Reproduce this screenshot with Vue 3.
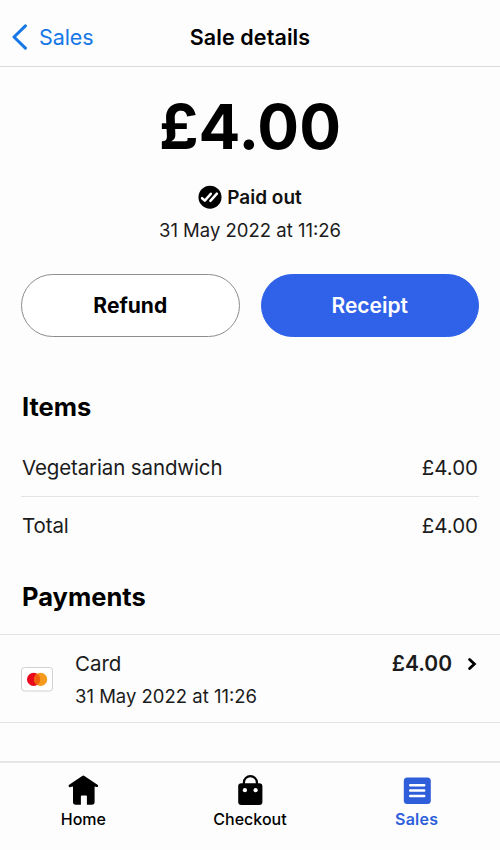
<script setup>
const items = [
  { name: 'Vegetarian sandwich', price: '£4.00' },
  { name: 'Total', price: '£4.00' },
]
</script>

<template>
  <div class="screen">
    <header class="nav">
      <a class="back">
        <svg width="16" height="26" viewBox="0 0 16 26" fill="none">
          <path d="M13.4 1.9 2 13 13.4 24.1" stroke="currentColor" stroke-width="3" stroke-linecap="round" stroke-linejoin="round" />
        </svg>
        <span class="back-label">Sales</span>
      </a>
      <h1 class="title"><span>Sale details</span></h1>
    </header>

    <main class="content">
      <div class="amount"><span>£4.00</span></div>
      <div class="status">
        <svg width="24" height="24" viewBox="0 0 24 24" fill="none">
          <circle cx="12" cy="12.2" r="11.5" fill="#000" />
          <path d="M4.1 13.2 6.8 15.6 12.8 8.8M12.4 15.9 18.9 8.6" stroke="#fff" stroke-width="2.5" stroke-linecap="round" stroke-linejoin="round" />
        </svg>
        <span class="status-label">Paid out</span>
      </div>
      <div class="date"><span>31 May 2022 at 11:26</span></div>

      <div class="actions">
        <button class="btn refund"><span>Refund</span></button>
        <button class="btn receipt"><span>Receipt</span></button>
      </div>

      <h2 class="items-title"><span>Items</span></h2>
      <div class="items">
        <div v-for="item in items" :key="item.name" class="row">
          <span :class="item.name === 'Total' ? 'total' : 'item-name'">{{ item.name }}</span>
          <span class="price">{{ item.price }}</span>
        </div>
      </div>

      <h2 class="payments-title"><span>Payments</span></h2>
      <div class="payment">
        <svg class="card" width="32" height="25" viewBox="0 0 32 25">
          <rect x=".5" y=".5" width="31" height="23.5" rx="3" fill="#fff" stroke="#d0d0d0" />
          <circle cx="12.6" cy="12.4" r="6.6" fill="#e9081d" />
          <circle cx="19.6" cy="12.4" r="6.6" fill="#f49a1c" />
          <path d="M16.1 6.8a6.6 6.6 0 0 1 0 11.2a6.6 6.6 0 0 1 0-11.2Z" fill="#f2600d" />
        </svg>
        <div class="payment-info">
          <span class="method">Card</span>
          <span class="payment-date">31 May 2022 at 11:26</span>
        </div>
        <div class="payment-amount">
          <span class="paid">£4.00</span>
          <svg width="10" height="14" viewBox="0 0 10 14" fill="none">
            <path d="M2.6 2.4 7.4 7 2.6 11.6" stroke="#000" stroke-width="2.8" stroke-linecap="round" />
          </svg>
        </div>
      </div>
    </main>

    <nav class="tabs">
      <a class="tab">
        <svg width="30" height="30" viewBox="0 0 30 30">
          <path d="M14.2.9Q15.3.2 16.4.9L29.5 9.8a1.2 1.2 0 0 1-1.2 2.1L26.6 11.4V27Q26.6 29.8 23.8 29.8H18.9V21.3Q18.9 20.4 18 20.4H13.8Q12.9 20.4 12.9 21.3V29.8H7.8Q5 29.8 5 27V11.4L2.5 11.9a1.2 1.2 0 0 1-1.3-2.1Z" />
        </svg>
        <span class="home">Home</span>
      </a>
      <a class="tab">
        <svg width="30" height="30" viewBox="0 0 30 30">
          <path d="M8.9 10V7.4a6.5 6.2 0 0 1 13 0V10" fill="none" stroke="#000" stroke-width="2.2" />
          <rect x="3.2" y="8.3" width="24.2" height="21.6" rx="3.2" />
          <circle cx="9.9" cy="15.2" r="2.1" fill="#fff" />
          <circle cx="20.6" cy="15.2" r="2.1" fill="#fff" />
        </svg>
        <span class="checkout">Checkout</span>
      </a>
      <a class="tab active">
        <svg width="30" height="30" viewBox="0 0 30 30">
          <rect x="1.8" y="2.5" width="27" height="26.5" rx="3.5" fill="currentColor" />
          <path d="M8.2 10.2H22.2M8.2 15.6H22.2M8.2 21H22.2" stroke="#fff" stroke-width="2.5" stroke-linecap="round" />
        </svg>
        <span class="sales">Sales</span>
      </a>
    </nav>
  </div>
</template>

<style>
body {
  margin: 0;
  background: #fdfdfd;
}
</style>

<style scoped>
.screen {
  box-sizing: border-box;
  width: 500px;
  height: 850px;
  display: flex;
  flex-direction: column;
  background: #fdfdfd;
  color: #000;
  font-family: Inter, "Liberation Sans", sans-serif;
  white-space: nowrap;
  overflow: hidden;
}
h1, h2 { margin: 0; }
.nav {
  box-sizing: border-box;
  height: 67px;
  padding: 8px 12px 0;
  display: grid;
  grid-template-columns: 1fr auto 1fr;
  align-items: center;
  border-bottom: 1px solid #dcdcdc;
}
.back {
  display: flex;
  align-items: center;
  gap: 11px;
  color: #1677e6;
  font-size: 21.5px;
  letter-spacing: -.1px;
}
.title { font-size: 21.5px; font-weight: 600; letter-spacing: .1px; }
.content { flex: 1; }
.amount {
  margin-top: 20px;
  font-size: 62px;
  line-height: 80px;
  font-weight: 700;
  text-align: center;
}
.status {
  height: 24px;
  margin-top: 18px;
  display: flex;
  align-items: center;
  justify-content: center;
  gap: 5px;
  font-size: 19px;
  font-weight: 600;
  color: #111;
}
.date {
  margin-top: 9px;
  line-height: 24px;
  font-size: 18.5px;
  text-align: center;
  color: #1b1b1b;
}
.actions {
  margin-top: 32px;
  padding: 0 21px;
  display: grid;
  grid-template-columns: 1fr 1fr;
  gap: 21px;
}
.btn {
  height: 63px;
  padding: 0;
  border: 1px solid #8d8d8d;
  border-radius: 32px;
  background: #fff;
  color: #000;
  font-family: inherit;
  font-size: 21px;
  font-weight: 600;
}
.refund { font-weight: 650; }
.receipt {
  border-color: #2f62e8;
  background: #2f62e8;
  color: #fff;
}
.items-title, .payments-title {
  padding-left: 22px;
  font-size: 25.5px;
  line-height: 34px;
  font-weight: 700;
}
.items-title { margin-top: 53px; }
.items { margin: 14px 21px 0; }
.row {
  box-sizing: border-box;
  height: 58px;
  display: flex;
  align-items: center;
  justify-content: space-between;
  padding: 0 1px;
  font-size: 20.5px;
  color: #1b1b1b;
}
.row + .row { border-top: 1px solid #e4e4e4; }
.item-name { letter-spacing: -.13px; }
.total { letter-spacing: -.1px; }
.payments-title { margin-top: 26px; }
.payment {
  box-sizing: border-box;
  height: 89px;
  margin-top: 20px;
  padding: 15px 23px 0 21px;
  display: flex;
  align-items: flex-start;
  border-top: 1px solid #e2e2e2;
  border-bottom: 1px solid #e2e2e2;
  color: #1b1b1b;
}
.card { margin-top: 17px; }
.payment-info {
  flex: 1;
  margin-left: 22px;
  display: flex;
  flex-direction: column;
  align-items: flex-start;
  gap: 4px;
  line-height: 28px;
}
.method { font-size: 20.5px; }
.payment-date { font-size: 18.5px; }
.payment-amount {
  display: flex;
  align-items: center;
  gap: 15px;
  height: 27px;
  font-size: 21px;
  font-weight: 600;
}
.tabs {
  box-sizing: border-box;
  height: 89px;
  padding-top: 12px;
  display: grid;
  grid-template-columns: repeat(3, 1fr);
  border-top: 2px solid #e6e6e6;
}
.tab {
  display: flex;
  flex-direction: column;
  align-items: center;
  gap: 3px;
  font-size: 16px;
  font-weight: 500;
  line-height: 22px;
}
.active {
  color: #2f5edb;
  font-weight: 600;
}
.sales { letter-spacing: .25px; }
</style>
